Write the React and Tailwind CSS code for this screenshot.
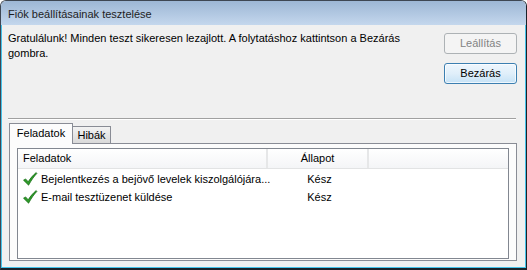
import React from "react";

const tasks = [
  { name: "Bejelentkezés a bejövő levelek kiszolgálójára...", status: "Kész" },
  { name: "E-mail tesztüzenet küldése", status: "Kész" },
];

const Check = () => (
  <svg width="16" height="16" viewBox="0 0 16 16" className="shrink-0">
    <path
      d="M1.5 9.2 L3.6 7.9 L6.2 10.8 C8.4 7.2 10.9 4.3 14.2 1.6 L14.9 2.4 C11.8 5.6 9.3 9.3 6.6 14.2 Z"
      fill="#2e9a2a"
      stroke="#176b14"
      strokeWidth="0.7"
      strokeLinejoin="round"
    />
  </svg>
);

const App = () => {
  return (
    <div className="h-[270px] w-[527px] bg-white">
      <div className="flex h-full flex-col overflow-hidden rounded-t-[6px] border border-b-2 border-[#3e4753] border-b-[#1c2128] border-r-[#1c2128] font-['Liberation_Sans',Arial,sans-serif] text-[11px] text-black">
        {/* title bar */}
        <div className="flex h-[24px] shrink-0 items-center bg-gradient-to-b from-[#9db7d5] to-[#c4d7ed] pl-[7px] pt-[2px] text-[11px] text-[#1e1e1e]">
          Fiók beállításainak tesztelése
        </div>

        {/* body */}
        <div className="flex min-h-0 flex-1 flex-col border-x border-b border-[#45c3ea] bg-[#f0f0f0] pl-[6px] pr-[8px]">
          <div className="flex justify-between">
            <p className="pt-[6px] leading-[15px]">
              Gratulálunk! Minden teszt sikeresen lezajlott. A folytatáshoz kattintson a Bezárás
              <br />
              gombra.
            </p>
            <div className="flex flex-col gap-[9px] pt-[8px]">
              <button
                type="button"
                disabled
                className="h-[21px] w-[73px] rounded-[3px] border border-[#adb2b5] bg-[#f4f4f4] text-[#838383]"
              >
                Leállítás
              </button>
              <button
                type="button"
                className="h-[21px] w-[73px] rounded-[3px] border border-[#3c7fb1] bg-gradient-to-b from-[#eef6fd] via-[#e0effa] to-[#c6e2f6] shadow-[inset_0_0_0_1px_rgba(255,255,255,0.7)]"
              >
                Bezárás
              </button>
            </div>
          </div>

          {/* etched separator */}
          <div className="mr-[1px] mt-[34px] h-[2px] shrink-0 border-t border-b border-t-[#a0a0a0] border-b-white" />

          {/* tabs */}
          <div className="ml-[1px] mt-[3px] flex min-h-0 flex-1 flex-col pb-[6px]">
            <div className="flex items-end">
              <div className="relative z-10 -mb-px flex h-[21px] w-[64px] items-center justify-center border border-b-0 border-[#898c95] bg-[#fcfcfc] pb-[1px]">
                Feladatok
              </div>
              <div className="flex h-[17px] w-[38px] items-center justify-center border-r border-t border-[#898c95] bg-gradient-to-b from-[#f3f3f3] to-[#d9d9d9]">
                Hibák
              </div>
            </div>
            <div className="flex min-h-0 flex-1 flex-col border border-[#898c95] bg-[#fcfcfc] px-[7px] pb-[1px] pt-[4px]">
              <div className="flex min-h-0 flex-1 flex-col border border-[#828790] bg-white">
                <div className="flex h-[20px] shrink-0 border-b border-[#e2e3e4] bg-gradient-to-b from-white to-[#f4f5f7]">
                  <div className="flex w-[250px] items-center border-r-2 border-[#e6e7e8] pl-[5px]">Feladatok</div>
                  <div className="flex w-[101px] items-center justify-center border-r-2 border-[#e6e7e8]">Állapot</div>
                </div>
                <div className="pt-[1px]">
                  {tasks.map((t) => (
                    <div key={t.name} className="flex h-[18px] items-center">
                      <div className="flex w-[251px] items-center gap-[3px] pl-[4px] pr-[2px]">
                        <Check />
                        <span className="whitespace-nowrap">{t.name}</span>
                      </div>
                      <div className="w-[101px] text-center">{t.status}</div>
                    </div>
                  ))}
                </div>
              </div>
            </div>
          </div>
        </div>
      </div>
    </div>
  );
};

export default App;
